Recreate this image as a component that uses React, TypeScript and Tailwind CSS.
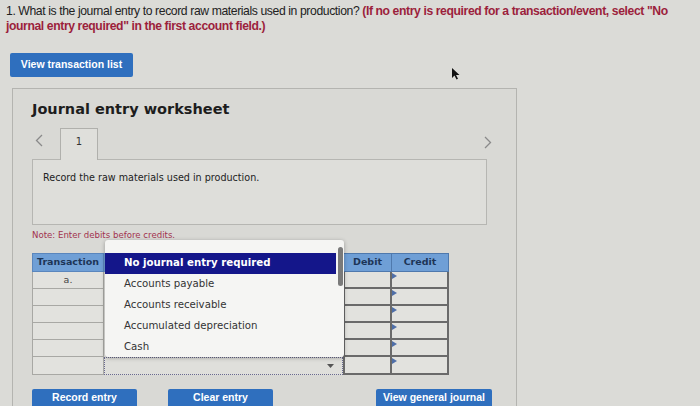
import React from 'react';

const options = [
  'No journal entry required',
  'Accounts payable',
  'Accounts receivable',
  'Accumulated depreciation',
  'Cash',
];

const rows = ['a.', '', '', '', '', ''];

const BlueButton: React.FC<{ label: string; className?: string }> = ({ label, className }) => (
  <button
    className={`bg-[#2f6fbe] text-white font-bold text-[10.5px] rounded-[2px] ${className ?? ''}`}
    style={{ fontFamily: '"Liberation Sans", Arial, sans-serif' }}
  >
    {label}
  </button>
);

const Chevron: React.FC<{ dir: 'left' | 'right' }> = ({ dir }) => (
  <svg width="8" height="13" viewBox="0 0 8 13">
    <path
      d={dir === 'left' ? 'M7 1 L1.5 6.5 L7 12' : 'M1 1 L6.5 6.5 L1 12'}
      fill="none"
      stroke="#8a8a8a"
      strokeWidth="1.3"
    />
  </svg>
);

export default function App() {
  return (
    <div className="w-[700px] h-[406px] overflow-hidden bg-[#dbdbd7] relative">
      <div
        className="w-[700px] pl-[6px] pt-[4px] text-[12.2px] leading-[15px] text-[#222] tracking-[-0.4px] whitespace-nowrap"
        style={{ fontFamily: '"Liberation Sans", Arial, sans-serif' }}
      >
        <div>
          <span>1. What is the journal entry to record raw materials used in production? </span>
          <span className="font-bold text-[#9c1f3c]">
            (If no entry is required for a transaction/event, select "No
          </span>
        </div>
        <div className="font-bold text-[#9c1f3c]">journal entry required" in the first account field.)</div>
      </div>

      <BlueButton label="View transaction list" className="ml-[10px] mt-[19px] w-[123px] h-[24px] block" />

      {/* mouse pointer */}
      <svg className="absolute left-[451px] top-[68px]" width="10" height="12" viewBox="0 0 10 12">
        <path d="M1 0 L1 10 L3.5 7.5 L5.5 11.5 L7 10.8 L5 7 L8.5 7 Z" fill="#111" />
      </svg>

      <div className="ml-[12px] mt-[11px] w-[505px] h-[330px] border border-[#b4b4b0] bg-[#d9d9d5] pl-[19px]">
        <div
          className="mt-[10px] text-[14.5px] font-bold text-[#1d1d1d]"
          style={{ fontFamily: '"DejaVu Sans", Verdana, sans-serif' }}
        >
          Journal entry worksheet
        </div>

        <div className="mt-[7px] flex items-end w-[455px] relative h-[31px]">
          <div className="ml-[3px] mb-[12px]">
            <Chevron dir="left" />
          </div>
          <div
            className="ml-[17px] w-[38px] h-[32px] border border-b-0 border-[#b0b0ac] bg-[#dfdfdb] flex justify-center pt-[5px] text-[10px] text-[#333] relative top-[1px] z-10"
            style={{ fontFamily: '"DejaVu Sans", sans-serif' }}
          >
            1
          </div>
          <div className="absolute right-[-5px] top-[8px]">
            <Chevron dir="right" />
          </div>
        </div>

        <div
          className="w-[455px] h-[66px] border border-[#b6b6b2] bg-[#dededa] pl-[10px] pt-[11px] text-[9.6px] text-[#222]"
          style={{ fontFamily: '"DejaVu Sans", Verdana, sans-serif' }}
        >
          Record the raw materials used in production.
        </div>

        <div className="mt-[4px] text-[8.6px] text-[#a2334f]" style={{ fontFamily: '"DejaVu Sans", Verdana, sans-serif' }}>
          Note: Enter debits before credits.
        </div>

        <div className="mt-[11px] relative w-[417px]" style={{ fontFamily: '"DejaVu Sans", Verdana, sans-serif' }}>
          <div className="flex h-[19px] text-[9.5px] font-bold text-[#1d3557]">
            <div className="w-[72px] bg-[#6f9fd6] border border-[#5a86bd] flex items-center justify-center">Transaction</div>
            <div className="w-[239px] bg-[#6f9fd6]" />
            <div className="w-[49px] bg-[#6f9fd6] border border-[#4f79ad] flex items-center justify-center">Debit</div>
            <div className="w-[57px] bg-[#6f9fd6] border border-l-0 border-[#4f79ad] flex items-center justify-center">Credit</div>
          </div>
          {rows.map((r, i) => (
            <div key={i} className={`flex ${i === 5 ? 'h-[18px]' : 'h-[17px]'}`}>
              <div className="w-[72px] bg-[#e2e2de] border-x border-b border-[#a8a8a4] flex items-start justify-center text-[9.5px] text-[#444] pt-[1px]">
                {r}
              </div>
              <div
                className={`w-[239px] ${i === 5 ? 'border border-dotted border-[#6a6a90] bg-[#dfdfdb] flex justify-end items-center pr-[8px]' : 'bg-[#e0e0dc]'}`}
              >
                {i === 5 && (
                  <svg width="7" height="4" viewBox="0 0 7 4">
                    <path d="M0 0 L7 0 L3.5 4 Z" fill="#555" />
                  </svg>
                )}
              </div>
              <div className="w-[49px] bg-[#e2e2de] border-x-2 border-b-2 border-[#6a6a6a]" />
              <div className="w-[57px] bg-[#e2e2de] border-r-2 border-b-2 border-[#6a6a6a] relative">
                <svg className="absolute left-[0px] top-[1px]" width="5" height="6" viewBox="0 0 5 6">
                  <path d="M0 0 L5 3 L0 6 Z" fill="#4f6fa8" />
                </svg>
              </div>
            </div>
          ))}

          {/* open dropdown */}
          <div className="absolute left-[73px] top-[-13px] w-[239px] h-[117px] bg-[#f5f5f3] rounded-[3px] shadow-[0_1px_4px_rgba(0,0,0,0.3)] pt-[13px] text-[10.2px] z-20">
            {options.map((o, i) => (
              <div
                key={o}
                className={`h-[21px] flex items-center pl-[19px] mr-[8px] ${i === 0 ? 'bg-[#14168a] text-white font-bold' : 'text-[#333]'}`}
              >
                {o}
              </div>
            ))}
            <div className="absolute right-[1px] top-[7px] w-[5px] h-[39px] rounded-full bg-[#7a7a7a]" />
          </div>
        </div>

        <div className="mt-[14px] flex w-[460px]">
          <BlueButton label="Record entry" className="w-[105px] h-[24px] pb-[6px]" />
          <BlueButton label="Clear entry" className="ml-[31px] w-[105px] h-[24px] pb-[6px]" />
          <BlueButton label="View general journal" className="ml-[103px] w-[116px] h-[24px] pb-[6px]" />
        </div>
      </div>
    </div>
  );
}
